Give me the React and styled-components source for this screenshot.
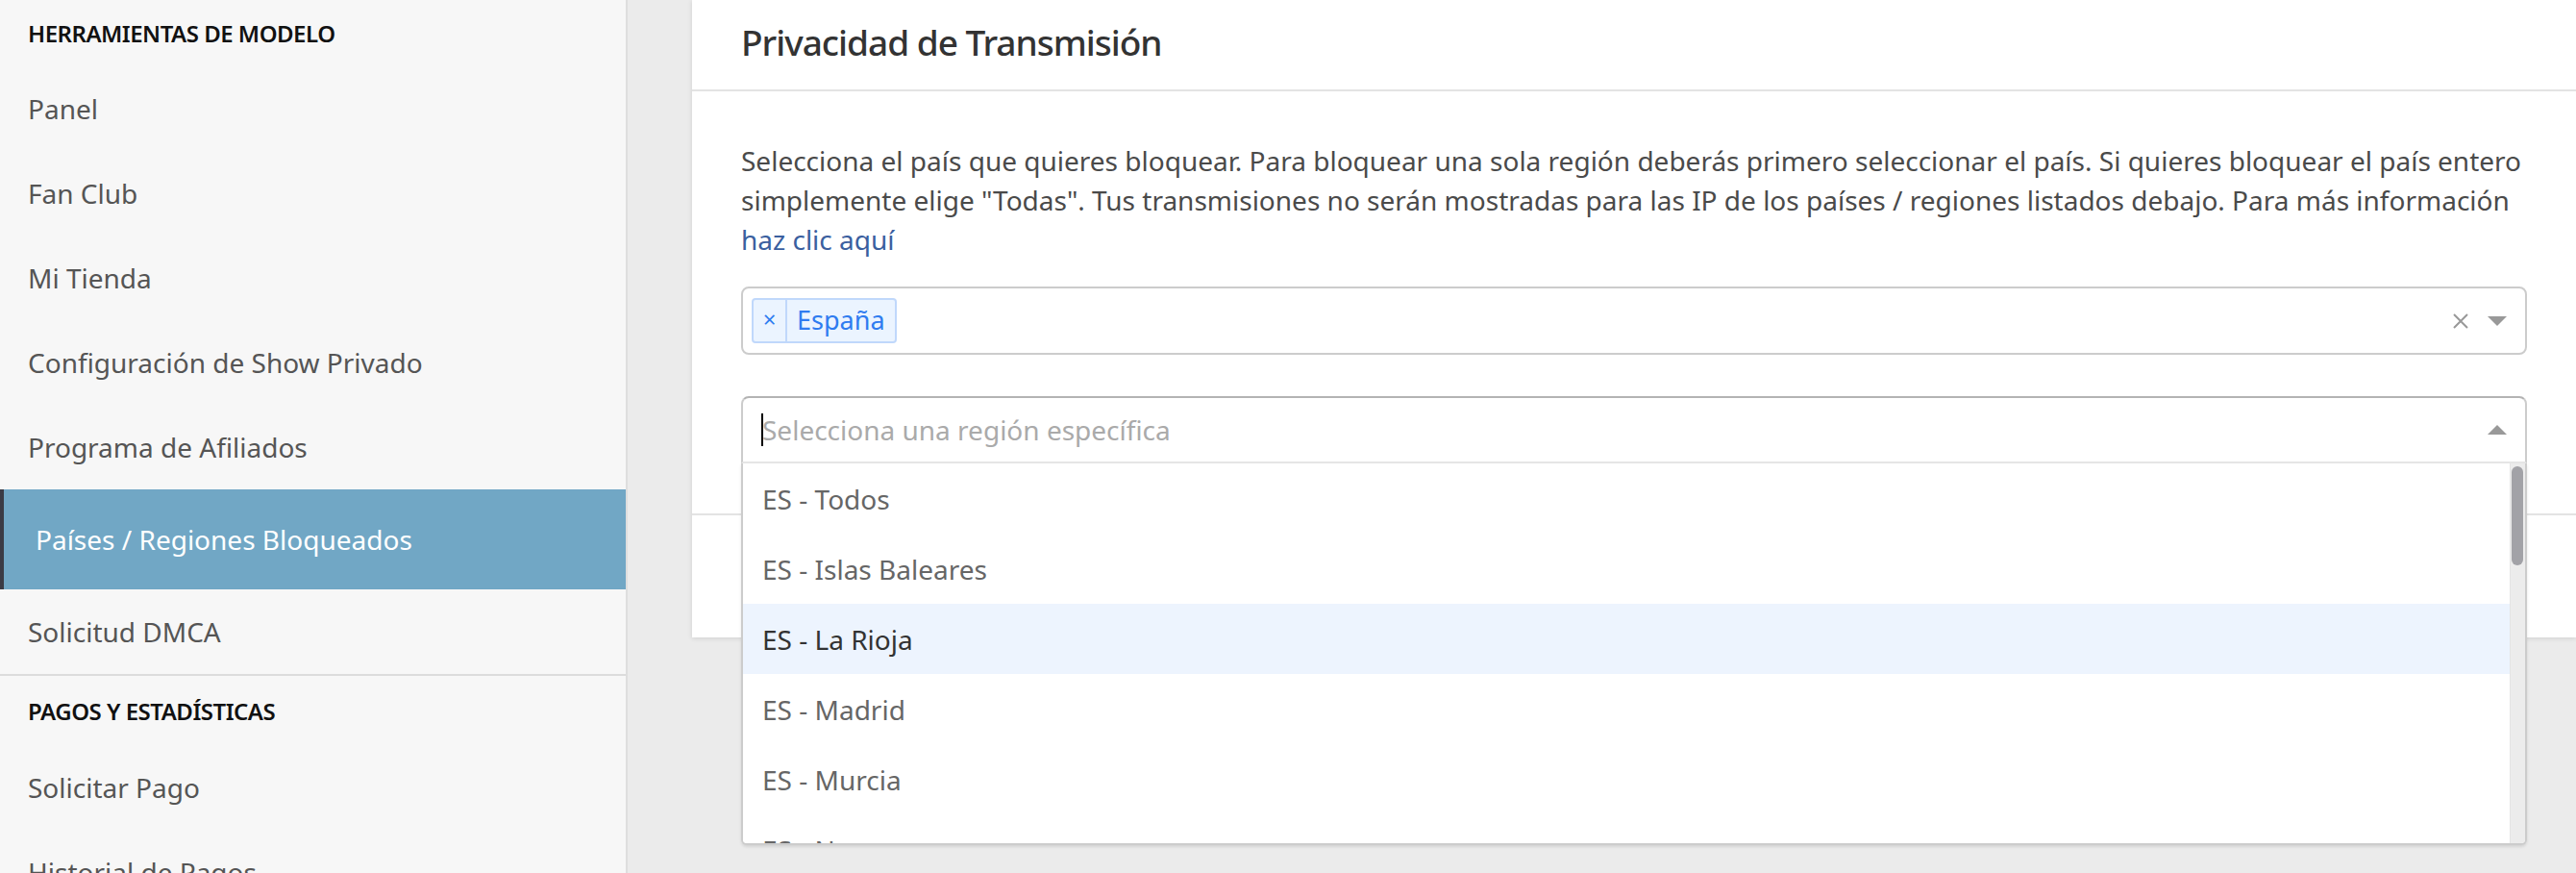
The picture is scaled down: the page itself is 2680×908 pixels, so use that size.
import React from "react";
import styled, { createGlobalStyle } from "styled-components";

const GlobalStyle = createGlobalStyle`
  html, body { margin: 0; padding: 0; }
  body {
    background: #ebebeb;
    font-family: "Noto Sans", "Open Sans", sans-serif;
    overflow: hidden;
  }
  * { box-sizing: border-box; }
`;

const Page = styled.div`
  display: flex;
  align-items: flex-start;
  height: 908px;
  overflow: hidden;
`;

const Sidebar = styled.nav`
  width: 653px;
  flex-shrink: 0;
  min-height: 908px;
  background: #f7f7f7;
  border-right: 2px solid #dedede;
`;

const Section = styled.div`
  border-bottom: 2px solid #dcdcdc;
`;

const SectionTitle = styled.div`
  height: ${(p) => (p.$compact ? 69 : 72)}px;
  display: flex;
  align-items: center;
  padding-left: 29px;
  font-size: 24px;
  font-weight: 600;
  color: #111;
  text-transform: uppercase;
  letter-spacing: -0.5px;
`;

const NavItem = styled.a`
  display: flex;
  align-items: center;
  height: ${(p) => (p.$active ? 104 : 88)}px;
  padding-left: ${(p) => (p.$active ? 33 : 29)}px;
  font-size: 28px;
  color: ${(p) => (p.$active ? "#fff" : "#555")};
  background: ${(p) => (p.$active ? "#71a7c5" : "transparent")};
  border-left: ${(p) => (p.$active ? "4px solid #3b3b45" : "none")};
  text-decoration: none;
  cursor: pointer;
`;

const Main = styled.main`
  flex: 1;
  padding-left: 67px;
`;

const Card = styled.section`
  background: #fff;
  box-shadow: 0 1px 5px rgba(0, 0, 0, 0.12);
`;

const CardHeader = styled.header`
  height: 95px;
  display: flex;
  align-items: center;
  padding: 0 51px 6px;
  border-bottom: 2px solid #e3e3e3;
`;

const Title = styled.h2`
  margin: 0;
  font-size: 37px;
  font-weight: 500;
  letter-spacing: -1px;
  color: #333;
`;

const CardBody = styled.div`
  padding: 52px 51px 52px;
`;

const Description = styled.p`
  margin: 0 0 28px;
  font-size: 28px;
  line-height: 41px;
  color: #4a4a4a;
`;

const Link = styled.a`
  color: #3b5f9f;
  text-decoration: none;
`;

const Control = styled.div`
  height: ${(p) => (p.$multi ? 71 : 70)}px;
  display: flex;
  align-items: center;
  border: 2px solid #ccc;
  border-color: ${(p) => (p.$open ? "#b3b3b3 #ccc #e6e6e6" : "#ccc")};
  border-radius: ${(p) => (p.$open ? "8px 8px 0 0" : "8px")};
  padding-left: ${(p) => (p.$multi ? 9 : 20)}px;
  padding-right: 19px;
  background: #fff;
`;

const ValueArea = styled.div`
  flex: 1;
  display: flex;
  align-items: center;
  min-width: 0;
`;

const Tag = styled.div`
  display: flex;
  align-items: stretch;
  height: 47px;
  border: 2px solid #c0d8fb;
  border-radius: 4px;
  background: #ebf4ff;
  color: #2f7cf0;
`;

const TagRemove = styled.span`
  width: 35px;
  display: flex;
  align-items: center;
  justify-content: center;
  border-right: 2px solid #c0d8fb;
  font-size: 24px;
  line-height: 1;
  padding-bottom: 4px;
`;

const TagLabel = styled.span`
  display: flex;
  align-items: center;
  padding: 0 10px 2px 10px;
  font-size: 27px;
`;

const Indicators = styled.div`
  display: flex;
  align-items: center;
  gap: 20px;
`;

const ClearIcon = styled.svg`
  width: 16px;
  height: 16px;
  display: block;
`;

const Caret = styled.span`
  width: 0;
  height: 0;
  border-left: 10px solid transparent;
  border-right: 10px solid transparent;
  ${(p) =>
    p.$up
      ? "border-bottom: 10px solid #999;"
      : "border-top: 10px solid #999;"}
`;

const SelectWrap = styled.div`
  position: relative;
  margin-top: ${(p) => p.$gap || 0}px;
`;

const Placeholder = styled.span`
  display: flex;
  align-items: center;
  font-size: 28px;
  color: #aaa;
`;

const TextCursor = styled.span`
  width: 2px;
  height: 34px;
  background: #000;
  margin-left: -1px;
  margin-right: -1px;
`;

const Menu = styled.div`
  position: absolute;
  top: 100%;
  left: 0;
  right: 0;
  z-index: 10;
  display: flex;
  background: #fff;
  border: 2px solid #ccc;
  border-top: none;
  border-radius: 0 0 6px 6px;
  box-shadow: 0 2px 3px rgba(0, 0, 0, 0.1);
  overflow: hidden;
`;

const MenuList = styled.div`
  flex: 1;
  height: 395px;
  overflow: hidden;
`;

const ScrollTrack = styled.div`
  width: 16px;
  flex-shrink: 0;
  background: #ececec;
  border-left: 1px solid #e4e4e4;
  padding: 3px 2px 0 1px;
`;

const ScrollThumb = styled.div`
  height: 103px;
  border-radius: 7px;
  background: #a2a2a7;
`;

const Option = styled.div`
  height: 73px;
  display: flex;
  align-items: center;
  padding-left: 20px;
  font-size: 28px;
  color: ${(p) => (p.$focused ? "#333" : "#666")};
  background: ${(p) => (p.$focused ? "#edf4fe" : "#fff")};
`;

const CardFooter = styled.footer`
  height: 129px;
  border-top: 2px solid #e3e3e3;
`;

const sections = [
  {
    title: "Herramientas de modelo",
    items: [
      "Panel",
      "Fan Club",
      "Mi Tienda",
      "Configuración de Show Privado",
      "Programa de Afiliados",
      "Países / Regiones Bloqueados",
      "Solicitud DMCA",
    ],
  },
  {
    title: "Pagos y estadísticas",
    items: ["Solicitar Pago", "Historial de Pagos", "Estadísticas"],
  },
];

const regions = [
  "Todos",
  "Islas Baleares",
  "La Rioja",
  "Madrid",
  "Murcia",
  "Navarra",
  "País Vasco",
  "Asturias",
  "Cantabria",
  "Andalucía",
  "Aragón",
  "Canarias",
  "Castilla-La Mancha",
  "Castilla y León",
  "Cataluña",
  "Extremadura",
  "Galicia",
  "Comunidad Valenciana",
  "Ceuta",
  "Melilla",
];

export default function App() {
  return (
    <>
      <GlobalStyle />
      <Page>
        <Sidebar>
          {sections.map((s, si) => (
            <Section key={s.title}>
              <SectionTitle $compact={si === 0}>{s.title}</SectionTitle>
              {s.items.map((it) => (
                <NavItem key={it} $active={it === "Países / Regiones Bloqueados"}>
                  {it}
                </NavItem>
              ))}
            </Section>
          ))}
        </Sidebar>
        <Main>
          <Card>
            <CardHeader>
              <Title>Privacidad de Transmisión</Title>
            </CardHeader>
            <CardBody>
              <Description>
                Selecciona el país que quieres bloquear. Para bloquear una sola
                región deberás primero seleccionar el país. Si quieres bloquear
                el país entero simplemente elige "Todas". Tus transmisiones no
                serán mostradas para las IP de los países / regiones listados
                debajo. Para más información <Link href="#">haz clic aquí</Link>
              </Description>
              <SelectWrap>
                <Control $multi>
                  <ValueArea>
                    <Tag>
                      <TagRemove>×</TagRemove>
                      <TagLabel>España</TagLabel>
                    </Tag>
                  </ValueArea>
                  <Indicators>
                    <ClearIcon viewBox="0 0 16 16">
                      <path
                        d="M1 1 L15 15 M15 1 L1 15"
                        stroke="#999"
                        strokeWidth="2"
                        fill="none"
                      />
                    </ClearIcon>
                    <Caret />
                  </Indicators>
                </Control>
              </SelectWrap>
              <SelectWrap $gap={43}>
                <Control $open>
                  <ValueArea>
                    <TextCursor />
                    <Placeholder>Selecciona una región específica</Placeholder>
                  </ValueArea>
                  <Indicators>
                    <Caret $up />
                  </Indicators>
                </Control>
                <Menu>
                  <MenuList>
                    {regions.map((r) => (
                      <Option key={r} $focused={r === "La Rioja"}>
                        ES - {r}
                      </Option>
                    ))}
                  </MenuList>
                  <ScrollTrack>
                    <ScrollThumb />
                  </ScrollTrack>
                </Menu>
              </SelectWrap>
            </CardBody>
            <CardFooter />
          </Card>
        </Main>
      </Page>
    </>
  );
}
